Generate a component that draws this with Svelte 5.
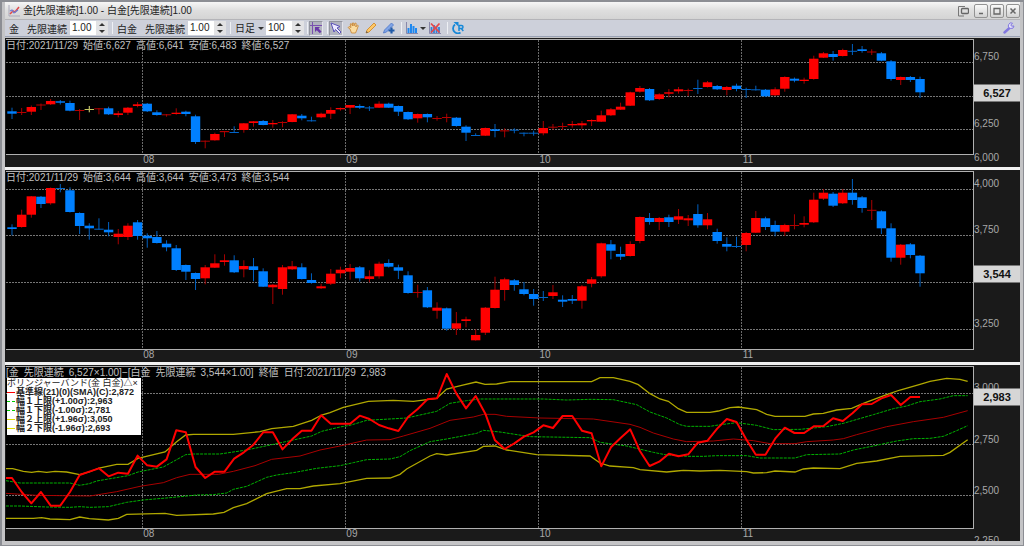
<script>
	const STEP = 9.66;
	const FIRST = 12;

	// kind, high, body top, body bottom, low
	const gold = [
		['b', 107.7, 111.3, 113.7, 119], ['r', 108, 112, 112.5, 115], ['r', 105.5, 107, 111.7, 115], ['r', 103.5, 104.5, 105.5, 110],
		['r', 99, 101, 104.3, 105], ['b', 100, 101.3, 102.7, 104.5], ['b', 100.7, 103, 110.7, 111.3], ['r', 109, 110, 111, 120],
		['y', 106, 109, 110, 112.3], ['r', 108, 108.3, 109, 114.3], ['b', 106.7, 108.3, 114.3, 115], ['r', 111, 113.3, 115, 117.3],
		['r', 107, 107.7, 112.7, 115], ['r', 102, 104.3, 106, 107.3], ['b', 103, 103.7, 111.3, 112], ['b', 110.3, 112.3, 115, 115.7],
		['r', 114, 114.3, 115.3, 116.7], ['r', 108.3, 112.7, 114, 114.7], ['b', 110.7, 111.7, 114, 116.3], ['b', 114.7, 116.3, 142, 144],
		['r', 140.5, 140.7, 141.4, 148.3], ['r', 132.7, 134, 140.3, 140.7], ['r', 131, 131, 132.2, 137], ['b', 126.3, 132, 132.7, 133],
		['r', 123, 123.3, 130, 132.7], ['r', 121, 121.3, 123, 126.7], ['b', 120, 121, 125, 125.3], ['r', 120, 123, 124.3, 127.7],
		['r', 121.3, 122, 123, 127.3], ['r', 114, 114.3, 122, 122.3], ['b', 114, 115.7, 118.3, 120.3], ['b', 116.7, 120.3, 121.3, 121.5],
		['r', 112.7, 113.7, 117.3, 118], ['r', 107.3, 110, 113.7, 119], ['r', 107.5, 108, 109.3, 110.7], ['r', 105, 105, 107.7, 114],
		['b', 104.3, 106, 107.7, 109], ['b', 106, 107.4, 108, 111], ['r', 101.3, 103.7, 107.7, 108], ['b', 102.7, 103.7, 107.7, 108],
		['b', 105.5, 106, 111.7, 116], ['b', 111.5, 112, 119.3, 120], ['r', 113.5, 114, 118.3, 122.7], ['b', 113.5, 114, 117.3, 122.3],
		['r', 116, 118, 118.7, 120.7], ['r', 113.7, 117, 117.7, 122.3], ['b', 117, 117.7, 126, 126.7], ['b', 125.3, 126.7, 132.7, 141],
		['b', 133.3, 135, 135.8, 136], ['r', 127.5, 128, 135.7, 136], ['b', 124, 129.3, 131, 137.3], ['r', 128.3, 130.3, 131.4, 137.3],
		['b', 128.3, 129.7, 130.5, 133.3], ['b', 132.5, 132.7, 133.4, 136.3], ['b', 130.7, 132.7, 133.4, 135.7], ['r', 121, 128, 133.3, 135.3],
		['r', 124, 126.7, 127.7, 129.7], ['r', 122.7, 126, 127, 130], ['r', 121, 124, 125.3, 127.7], ['r', 121, 123.3, 125.3, 128.7],
		['r', 119.3, 120, 121.3, 126], ['r', 110.7, 115.3, 121.7, 122], ['r', 108, 109.3, 115.3, 116], ['r', 102.7, 106.7, 109.7, 110],
		['r', 91.7, 92.3, 105.7, 106], ['r', 86, 88, 91.7, 92.7], ['b', 88, 89, 100.3, 101], ['r', 93.3, 94.3, 99, 100],
		['r', 89, 92.3, 93.7, 97.3], ['r', 87, 89.3, 91.3, 93.7], ['r', 88.7, 90, 91, 96], ['b', 79.7, 88, 88.7, 94],
		['r', 81, 82.3, 87, 87.5], ['b', 85, 86, 89.3, 90], ['r', 86, 87, 90, 95.3], ['b', 83.7, 85.7, 89, 91.3],
		['b', 87.7, 89, 89.7, 98], ['b', 85.7, 89.3, 90, 90.5], ['b', 89, 89.7, 96.3, 97], ['r', 87.3, 89.3, 95.3, 96],
		['r', 76.3, 77, 88.7, 91.7], ['b', 77.5, 78.7, 80.7, 82.3], ['r', 77.7, 79.7, 81, 83.7], ['r', 55.7, 58.7, 79, 79.7],
		['r', 52, 53.3, 57.7, 58], ['b', 51, 54, 57, 60.7], ['r', 48.7, 50, 56, 56.5], ['b', 44, 50.8, 51.5, 55],
		['b', 46, 49.3, 51, 52.7], ['r', 49.3, 51.5, 52.3, 55], ['b', 52, 53.3, 60.7, 61.3], ['b', 60, 61.3, 79, 80.7],
		['r', 76.5, 77, 80, 85], ['b', 76, 77, 80, 82], ['b', 76.7, 79, 92.3, 98]
	];

	const platinum = [
		['b', 224.3, 227.3, 229, 235.3], ['r', 209.7, 214.7, 227, 227.7], ['r', 196, 196.3, 214.7, 217.7], ['b', 196, 196.7, 204, 208],
		['r', 187.5, 188, 203.3, 204.7], ['b', 184, 188, 188.8, 192.3], ['b', 187.3, 190.3, 212, 212.5], ['b', 212.3, 213, 226, 234],
		['b', 223.3, 225.7, 228.3, 239.7], ['b', 218.3, 228.7, 229.3, 229.6], ['b', 222, 229.7, 232.3, 236.3], ['r', 229, 233.7, 237, 244.3],
		['r', 223.3, 225.7, 237, 240], ['b', 220, 222.3, 236, 239.7], ['b', 233.3, 235.7, 238.3, 247.7], ['b', 231, 237, 243, 243.5],
		['b', 240.3, 243.7, 247.3, 251.3], ['b', 245, 248.3, 270, 271], ['b', 264.5, 265, 271.7, 280], ['b', 272.5, 273, 279, 290],
		['r', 265, 267.3, 278.3, 284.3], ['r', 254.3, 263.3, 267.7, 268], ['r', 254.3, 260.3, 262, 265.7], ['b', 255.3, 260.3, 272.3, 273],
		['r', 260.3, 266, 269.3, 277.3], ['b', 258, 266.3, 270, 281.3], ['b', 268.3, 271.3, 286.7, 287], ['r', 284, 284.7, 287.3, 304],
		['r', 265, 267.3, 289, 294.7], ['r', 261, 266.3, 269.3, 270], ['b', 263.3, 267.3, 279, 279.5], ['b', 273.3, 280, 283, 283.7],
		['r', 283.7, 286.3, 288.3, 289], ['r', 269, 273.7, 283.7, 285], ['r', 266.7, 269.7, 273.3, 278.3], ['r', 264, 268, 271.7, 279.7],
		['b', 266, 267.3, 278.3, 281.7], ['r', 270.3, 276.3, 279, 282.3], ['r', 261.7, 263.7, 276.3, 278.7], ['b', 259.3, 263, 266.7, 267.5],
		['b', 264.7, 267.3, 270.7, 279], ['b', 271.3, 275.3, 293, 293.7], ['r', 284.7, 292, 292.7, 297.7], ['b', 287, 290.3, 307.3, 308],
		['r', 302.3, 307.7, 310.7, 318.7], ['b', 307.5, 308.3, 328.7, 330.7], ['r', 312, 323.3, 328.7, 335], ['r', 316.7, 319.3, 321, 327.3],
		['r', 329.3, 335, 340.3, 340.7], ['r', 307, 307.7, 332.7, 335], ['r', 276.7, 289.7, 308, 308.5], ['r', 277.7, 279.3, 290, 300.7],
		['b', 279, 280.3, 285, 290.7], ['b', 282, 289.3, 294, 295.3], ['b', 289, 294, 299, 305.7], ['b', 291, 297, 297.7, 301],
		['r', 285, 292.3, 296, 299], ['b', 295.3, 299.7, 301.7, 307], ['b', 295, 299, 300.7, 304], ['r', 285, 286.3, 300.7, 308.7],
		['r', 277, 279.3, 283.7, 287.3], ['r', 242.7, 243.3, 276.3, 277.7], ['b', 240, 244.3, 250.7, 259.3], ['b', 246.7, 254, 256.7, 260],
		['r', 241.3, 244, 256, 256.5], ['r', 216.5, 217, 241, 243.3], ['b', 213, 218, 222, 224.7], ['r', 217, 218, 222, 230],
		['b', 214.7, 217.3, 222, 227], ['r', 209, 216.3, 219.7, 224], ['r', 215, 218.3, 220.3, 226], ['b', 204.3, 214, 225.3, 227.7],
		['r', 213, 219.3, 225.3, 229.3], ['b', 228.7, 232, 241, 243.7], ['b', 237.3, 244, 246.7, 251.3], ['b', 236.7, 246, 246.7, 248],
		['r', 232, 233, 245, 251.3], ['r', 211, 218, 232.7, 233], ['b', 216.7, 218.3, 227, 230], ['b', 220.7, 225, 231.7, 236.3],
		['r', 223.7, 225, 231.7, 236], ['r', 214.3, 225, 225.7, 229.3], ['r', 216.3, 223, 224.7, 227.3], ['r', 192.7, 199.7, 222.3, 223],
		['r', 189, 192.7, 198.7, 200], ['b', 192, 193.7, 205.7, 207], ['r', 189, 192.7, 203.3, 204], ['b', 179, 192.7, 200, 204.7],
		['b', 196, 197.3, 208, 212.7], ['r', 200, 209.8, 210.6, 220], ['b', 210.3, 211.3, 228.3, 234], ['b', 223.3, 228.3, 257.7, 261.7],
		['r', 244, 244.7, 257.7, 264.7], ['b', 243, 244.3, 255, 258.3], ['b', 255, 255.7, 273.3, 286.7]
	];

	const spread = [
		354, 396, 430, 396, 437, 437, 396, 345, 335, 325, 349, 338, 341, 287, 316, 320, 298, 211, 217, 321, 354, 335, 335, 296,
		277, 254, 217, 217, 268, 238, 212, 212, 166, 191, 191, 191, 167, 177, 195, 205, 213, 171, 147, 118, 115, 42, 101, 145,
		108, 161, 241, 267, 250, 230, 217, 196, 204, 168, 168, 212, 220, 319, 262, 234, 208, 273, 318, 305, 281, 289, 283, 248,
		242, 206, 177, 186, 238, 284, 284, 236, 203, 219, 219, 199, 198, 175, 183, 160, 133, 132, 115, 105, 135, 111, 111
	];
	const spreadPoints = '18,354 ' + spread.map((y, i) => `${(36 + i * STEP * 3).toFixed(1)},${y}`).join(' ');

	const bands = [
		{ kind: 'outer', points: '18,326 38,326 70,334 95,337 115,334 140,337 165,334 200,336 239,344 268,336 297,324 350,313 384,313 414,295 495,276 530,245 557,225 580,223 700,223 780,215 815,206 880,199 935,181 965,165 990,158 1030,142 1105,124 1180,121 1240,124 1310,115 1340,87 1385,76 1428,66 1455,73 1490,72 1530,65 1775,65 1800,53 1840,53 1890,64 1915,74 1950,101 1980,117 2005,124 2035,146 2060,157 2130,157 2155,153 2190,143 2215,141 2270,149 2300,163 2325,169 2415,169 2440,162 2470,160 2510,150 2555,145 2590,130 2660,104 2700,90 2760,73 2790,64 2840,55 2880,58 2903,64' },
		{ kind: 'inner', points: '18,362 60,369 210,369 239,376 268,371 290,363 384,347 414,336 490,321 557,284 580,282 660,282 740,270 820,253 880,240 935,228 965,214 1020,201 1050,196 1100,181 1220,174 1310,154 1350,130 1400,122 1440,117 1630,117 1700,120 1770,118 1840,119 1910,134 1950,156 2000,174 2040,194 2060,199 2130,199 2155,195 2210,188 2270,196 2320,209 2400,208 2480,200 2530,190 2620,164 2680,146 2720,138 2760,125 2820,117 2860,107 2903,107' },
		{ kind: 'mean', points: '18,400 110,406 270,408 350,395 420,379 490,368 530,353 570,343 655,343 700,334 765,317 815,298 900,288 960,270 1020,258 1100,240 1170,239 1210,228 1290,205 1350,181 1420,171 1450,163 1485,163 1520,169 1620,174 1780,177 1890,193 1920,202 1960,219 2020,237 2060,245 2140,243 2200,237 2260,242 2310,251 2385,251 2420,245 2500,240 2530,236 2570,224 2660,200 2740,185 2830,172 2903,152' },
		{ kind: 'inner', points: '18,438 60,438 140,441 210,442 240,440 270,442 325,440 380,427 430,420 510,413 590,405 640,404 680,399 700,388 740,379 800,352 830,345 880,338 950,325 1020,317 1060,308 1100,299 1170,297 1200,290 1230,272 1290,245 1340,237 1430,220 1450,211 1500,216 1590,230 1770,233 1800,247 1880,258 1960,277 2000,285 2030,286 2060,289 2110,289 2150,287 2240,287 2280,294 2385,294 2420,284 2520,282 2560,270 2620,258 2690,243 2740,236 2790,235 2830,229 2870,212 2903,197' },
		{ kind: 'outer', points: '18,475 100,475 125,473 150,477 210,479 239,471 268,476 325,480 355,475 380,463 495,460 530,466 640,462 672,457 700,443 740,431 800,401 860,386 900,386 940,378 1020,371 1100,355 1170,354 1200,343 1220,327 1290,288 1310,281 1340,285 1430,271 1450,259 1485,258 1520,270 1610,284 1770,288 1800,309 1830,318 1900,323 1920,329 2000,336 2030,333 2050,331 2100,333 2160,331 2240,335 2260,339 2300,338 2325,333 2385,336 2410,327 2440,324 2520,326 2570,310 2630,303 2700,289 2830,286 2850,277 2903,239' }
	];

	const months = [
		{ label: '08', x: 142 },
		{ label: '09', x: 345 },
		{ label: '10', x: 538 },
		{ label: '11', x: 741 }
	];

	const panels = [
		{
			id: 'gold', size: 129, view: '6 40 967 114', box: [6, 40, 967, 114], unit: 1, candles: gold, grid: [62.5, 96.5, 129.5],
			info: ['日付:2021/11/29', '始値:6,627', '高値:6,641', '安値:6,483', '終値:6,527'],
			ticks: [['6,750', 19], ['6,250', 86], ['6,000', 120]], last: ['6,527', 55]
		},
		{
			id: 'platinum', size: 192, view: '6 172 967 177', box: [6, 172, 967, 177], unit: 1, candles: platinum, grid: [189.5, 235.5, 282.5, 329.5],
			info: ['日付:2021/11/29', '始値:3,644', '高値:3,644', '安値:3,473', '終値:3,544'],
			ticks: [['4,000', 14], ['3,750', 60], ['3,250', 154]], last: ['3,544', 104]
		},
		{
			id: 'spread', size: 176, view: '18 21 2901 483', box: [18, 21, 2901, 483], unit: 3, candles: [], grid: [100.5, 253.5, 406.5],
			info: ['[金', '先限連続', '6,527×1.00]−[白金', '先限連続', '3,544×1.00]', '終値', '日付:2021/11/29', '2,983'],
			ticks: [['3,000', 23], ['2,750', 75], ['2,500', 126], ['2,250', 176]], last: ['2,983', 32]
		}
	];

	const legend = [
		{ kind: 'main', text: '基準線(21)(0)(SMA)(C):2,872' },
		{ kind: 'green', text: '幅１上限(+1.00σ):2,963' },
		{ kind: 'green', text: '幅１下限(-1.00σ):2,781' },
		{ kind: 'yellow', text: '幅２上限(+1.96σ):3,050' },
		{ kind: 'yellow', text: '幅２下限(-1.96σ):2,693' }
	];

	let goldRatio = $state('1.00');
	let platinumRatio = $state('1.00');
	let bars = $state('100');

	const bump = (value, by) => (Number(value) + by).toFixed(2);
</script>

{#snippet spinner(name, up, down)}
	<span class="spin">
		<button type="button" aria-label={`${name} 増`} onclick={up}><i class="up"></i></button>
		<button type="button" aria-label={`${name} 減`} onclick={down}><i class="down"></i></button>
	</span>
{/snippet}

<div class="window">
	<header class="titlebar">
		<svg class="app-icon" viewBox="0 0 12 12" aria-hidden="true">
			<path d="M1 0v11h11" fill="none" stroke="#aab" />
			<path d="M2 9l3-3 2 1 4-5" fill="none" stroke="#e04848" stroke-width="1.5" />
			<path d="M2 6l2-1 2 3 4-3" fill="none" stroke="#6a7ed8" stroke-width="1.2" />
		</svg>
		<h1>金[先限連続]1.00 - 白金[先限連続]1.00</h1>
		<button class="dock" type="button" aria-label="切り離し">
			<svg viewBox="0 0 12 12"><path d="M7 11H1.500V1.500H8" fill="none" stroke="#777" /><rect x="4.500" y="3.500" width="7" height="5" rx="1" fill="#ddd" stroke="#666" stroke-width="1.300" /></svg>
		</button>
		<div class="window-buttons">
			<button type="button" aria-label="最小化"><svg viewBox="0 0 12 12"><path d="M4 8.500h4" stroke="#666" stroke-width="1.500" /></svg></button>
			<button type="button" aria-label="最大化"><svg viewBox="0 0 12 12"><path d="M3 3.500h6v5.500H3z" fill="none" stroke="#666" stroke-width="1.300" /></svg></button>
			<button type="button" aria-label="閉じる"><svg viewBox="0 0 12 12"><path d="M3.500 3.500l5 5M8.500 3.500l-5 5" stroke="#666" stroke-width="1.500" /></svg></button>
		</div>
	</header>

	<div class="toolbar">
		<label class="field">
			<span class="name">金</span><span class="kind">先限連続</span>
			<input type="text" bind:value={goldRatio} />
		</label>
		{@render spinner('金', () => (goldRatio = bump(goldRatio, 0.01)), () => (goldRatio = bump(goldRatio, -0.01)))}
		<i class="sep"></i>
		<label class="field">
			<span class="name">白金</span><span class="kind">先限連続</span>
			<input type="text" bind:value={platinumRatio} />
		</label>
		{@render spinner('白金', () => (platinumRatio = bump(platinumRatio, 0.01)), () => (platinumRatio = bump(platinumRatio, -0.01)))}
		<i class="sep"></i>
		<span class="period">
			<select aria-label="足種">
				<option>日足</option>
				<option>週足</option>
				<option>月足</option>
			</select>
			<i class="caret"></i>
		</span>
		<input type="text" aria-label="本数" bind:value={bars} />
		{@render spinner('本数', () => (bars = String(Number(bars) + 1)), () => (bars = String(Number(bars) - 1)))}
		<i class="sep tight"></i>
		<button class="tool pressed" type="button" aria-label="十字線">
			<svg viewBox="0 0 12 12"><path d="M2.500 0v12M0 3.500h12" stroke="#7a50b0" fill="none" /><path d="M5 5h5L8.500 6.500l3 3-1.700 1.700-3-3L5 10z" fill="#6a38a8" /></svg>
		</button>
		<i class="sep"></i>
		<button class="tool pressed" type="button" aria-label="選択">
			<svg viewBox="0 0 12 12"><path d="M1 1l9 3.500-3 1.500 4 4-1.500 1.500-4-4L4 10z" fill="#eceaff" stroke="#5a50b8" /></svg>
		</button>
		<button class="tool" type="button" aria-label="移動">
			<svg viewBox="0 0 12 12"><path d="M3 7L1 5.500 2 4.500l2 1-.8-3.500 1-.5L5.500 4V1h1.200l.3 3 1-3 1.200.4L8.800 5l1.500-2 1 .7L9.800 8 8.500 11h-4z" fill="#fbdca0" stroke="#c98a3c" stroke-width=".9" /></svg>
		</button>
		<button class="tool" type="button" aria-label="描画">
			<svg viewBox="0 0 12 12"><path d="M1 11l1-3 7-7 2 2-7 7z" fill="#ffc868" stroke="#d08c2c" stroke-width=".9" /><path d="M1 11l.6-2 1.400 1.400z" fill="#555" /></svg>
		</button>
		<button class="tool" type="button" aria-label="描画追加">
			<svg viewBox="0 0 12 12"><path d="M.5 11l1-3 7-7 2 2-7 7z" fill="#7fa4e8" stroke="#557cc8" stroke-width=".9" /><path d="M8.500 5.500v6M5.500 8.500h6" stroke="#205aa8" stroke-width="2.200" /></svg>
		</button>
		<i class="sep"></i>
		<button class="tool with-caret" type="button" aria-label="指標">
			<svg viewBox="0 0 12 12"><path d="M.5 0v11.500H12" fill="none" stroke="#88a" /><path d="M2.500 11V6M5 11V2M7.500 11V4M10 11V6" stroke="#1e88f0" stroke-width="2" /></svg>
			<i class="caret"></i>
		</button>
		<button class="tool" type="button" aria-label="指標削除">
			<svg viewBox="0 0 12 12"><path d="M.5 0v11.500H12" fill="none" stroke="#88a" /><path d="M2.500 11V5M5 11V3M7.500 11V4M10 11V5" stroke="#3080d8" stroke-width="1.800" /><path d="M2 1.500l8.500 9M10.500 1.500L2 10.500" stroke="#e84848" stroke-width="1.800" /></svg>
		</button>
		<i class="sep"></i>
		<button class="tool" type="button" aria-label="更新">
			<svg viewBox="0 0 12 12"><path d="M3 2.500C.5 4.500.5 8 2.500 9.800S7 11.500 8.500 10.500" fill="none" stroke="#1688d8" stroke-width="1.800" /><path d="M1.500 0H6.500v4.500z" fill="#1688d8" /><path d="M7 9V3.500h2.500a1.500 1.500 0 0 1 0 3H7M9.300 6.500l2 2.500" fill="none" stroke="#1688d8" stroke-width="1.500" /></svg>
		</button>
		<button class="tool settings" type="button" aria-label="設定">
			<svg viewBox="0 0 12 12"><path d="M1.500 10.500L7 5.500" stroke="#8278e0" stroke-width="2.400" stroke-linecap="round" /><path d="M9.500 1.200A2.800 2.800 0 1 0 11 4L8.600 4.200 7.800 3z" fill="#e4e2fa" stroke="#8278e0" /></svg>
		</button>
	</div>

	<main class="panels">
		{#each panels as p (p.id)}
			{@const [vx, vy, vw, vh] = p.box}
			<section class="panel" style:flex-grow={p.size}>
				<div class="body">
					<div class="plot">
						<svg viewBox={p.view} preserveAspectRatio="none" aria-hidden="true">
							{#each p.grid as y}
								<line class="grid" x1={vx} x2={vx + vw} y1={y} y2={y} />
							{/each}
							{#each months as m}
								<line class="grid month" x1={(m.x + 0.5) * p.unit} x2={(m.x + 0.5) * p.unit} y1={vy} y2={vy + vh} />
							{/each}
							{#each p.candles as [kind, high, top, bottom, low], i}
								{@const x = FIRST + i * STEP}
								<g class={kind}>
									<line class="wick" x1={x} x2={x} y1={high} y2={low} />
									<rect class:flat={bottom - top < 1.2} x={x - 4.7} y={top} width="9.4" height={Math.max(bottom - top, 1)} />
								</g>
							{/each}
							{#if p.id === 'spread'}
								{#each bands as band}
									<polyline class={band.kind} points={band.points} />
								{/each}
								<polyline class="main" points={spreadPoints} />
							{/if}
						</svg>
						<p class="info">
							{#each p.info as part}<span>{part}</span>{/each}
						</p>
						{#if p.id === 'spread'}
							<div class="legend">
								<div class="legend-title">ボリンジャーバンド(金 白金)△×</div>
								{#each legend as row}
									<div class="legend-row"><i class={row.kind}></i>{row.text}</div>
								{/each}
							</div>
						{/if}
					</div>
					<div class="months">
						{#each months as m}
							<span style:left={`${((m.x - 4) / 968) * 100}%`}>{m.label}</span>
						{/each}
					</div>
				</div>
				<div class="axis">
					{#each p.ticks as [text, y]}
						<span class="tick" style:top={`${(y / p.size) * 100}%`}>{text}</span>
					{/each}
					<strong style:top={`${(p.last[1] / p.size) * 100}%`}>{p.last[0]}</strong>
				</div>
			</section>
		{/each}
	</main>
</div>

<style>
	:global(body) {
		margin: 0;
		background: #bcbcbe;
	}

	.window {
		box-sizing: border-box;
		display: flex;
		flex-direction: column;
		height: 100vh;
		min-height: 360px;
		padding: 0 3px 4px 3px;
		border: 1px solid #8c8e94;
		border-width: 2px 1px 1px 2px;
		background: #c4c4c6;
		font-family: 'Liberation Sans', 'Noto Sans CJK JP', sans-serif;
		font-size: 10px;
		color: #222;
	}

	button,
	input,
	select {
		margin: 0;
		padding: 0;
		border: 0;
		border-radius: 0;
		background: none;
		font: inherit;
		color: inherit;
	}

	svg {
		display: block;
	}

	.titlebar {
		display: flex;
		align-items: center;
		flex: none;
		height: 17px;
		padding-left: 3px;
		border-bottom: 1px solid #b4b4b8;
		background: linear-gradient(#f6f6f6, #dedede 50%, #d4d4d4);
	}

	.app-icon {
		width: 12px;
		height: 12px;
		margin-right: 3px;
	}

	h1 {
		flex: 1;
		margin: 0;
		font-size: 10px;
		font-weight: 400;
		line-height: 16px;
		white-space: nowrap;
	}

	.dock svg {
		width: 12px;
		height: 12px;
	}

	.window-buttons {
		display: flex;
		gap: 2px;
		margin-left: 5px;
	}

	.window-buttons button {
		box-sizing: border-box;
		width: 14px;
		height: 14px;
		border: 1px solid #939393;
		border-radius: 2px;
		background: linear-gradient(#fafafa, #d2d2d2);
	}

	.window-buttons svg {
		width: 12px;
		height: 12px;
	}

	.toolbar {
		display: flex;
		align-items: center;
		flex: none;
		height: 16px;
		padding-left: 4px;
		border-bottom: 1px solid #9aa2b4;
		background: #cdd0da;
	}

	.field {
		display: flex;
		align-items: center;
		white-space: nowrap;
	}

	.kind {
		margin: 0 3px 0 8px;
	}

	.toolbar input {
		box-sizing: border-box;
		width: 26px;
		height: 14px;
		padding-left: 2px;
		background: #fff;
		line-height: 14px;
	}

	.spin {
		display: flex;
		flex-direction: column;
		width: 12px;
		height: 14px;
		background: #e2e2e4;
	}

	.spin button {
		display: flex;
		align-items: center;
		justify-content: center;
		flex: 1;
	}

	.up,
	.down,
	.caret {
		border: 3px solid transparent;
	}

	.up {
		border-top: 0;
		border-bottom-color: #333;
	}

	.down,
	.caret {
		border-bottom: 0;
		border-top-color: #333;
	}

	.sep {
		width: 1px;
		height: 12px;
		margin: 0 4px;
		background: #eef0f4;
	}

	.sep.tight {
		margin: 0 1px 0 3px;
	}

	.period {
		display: flex;
		align-items: center;
		gap: 3px;
		margin-right: 2px;
	}

	select {
		appearance: none;
		width: 20px;
	}

	.tool {
		display: flex;
		align-items: center;
		justify-content: center;
		box-sizing: border-box;
		height: 15px;
		padding: 0 1px;
		margin-right: 4px;
	}

	.tool svg {
		width: 12px;
		height: 12px;
	}

	.tool + .sep {
		margin: 0 3px 0 1px;
	}

	.pressed {
		margin-right: 3px;
		background: #b2b4c0;
		border: 1px solid #92949e;
		border-right-color: #e4e4ea;
		border-bottom-color: #e4e4ea;
		padding: 0;
	}

	.pressed + .sep {
		margin: 0 1px;
	}

	.with-caret {
		gap: 2px;
		margin-right: 1px;
	}

	.settings {
		margin-left: auto;
	}

	.panels {
		display: flex;
		flex-direction: column;
		gap: 3px;
		flex: 1;
		min-height: 0;
		margin-top: 1px;
		background: #f2f2f2;
	}

	.panel {
		display: flex;
		flex: 1 1 0;
		min-height: 0;
		background: #1a1a1a;
		color: #a8a8a8;
	}

	.body {
		display: flex;
		flex: 1;
		flex-direction: column;
		min-width: 0;
	}

	.plot {
		position: relative;
		flex: 1;
		min-height: 0;
		margin: 1px 0 0 1px;
		border: solid #b0b0b0;
		border-width: 1px 1px 1px 0;
		background: #000;
	}

	.plot > svg {
		position: absolute;
		inset: 0;
		width: 100%;
		height: 100%;
	}

	.plot svg line,
	.plot svg polyline {
		fill: none;
		vector-effect: non-scaling-stroke;
	}

	.grid {
		stroke: #767676;
		stroke-dasharray: 2 1;
	}

	.month {
		stroke: #6a6a6a;
	}

	.r {
		fill: #f00;
		stroke: #a80000;
	}

	.b {
		fill: #0080ff;
		stroke: #0060c0;
	}

	.y {
		fill: #c8c860;
		stroke: #e0e080;
	}

	.plot svg rect {
		stroke: none;
	}

	.r .flat {
		fill: #b40000;
	}

	.b .flat {
		fill: #0064c8;
	}

	.plot svg .outer {
		stroke: #b0a800;
		stroke-width: 1.3px;
	}

	.plot svg .inner {
		stroke: #00b000;
		stroke-dasharray: 3 1;
	}

	.plot svg .mean {
		stroke: #a80000;
	}

	.plot svg .main {
		stroke: #f00;
		stroke-width: 2px;
		stroke-linejoin: round;
	}

	.info {
		position: absolute;
		top: 0;
		left: 0;
		display: flex;
		gap: 5px;
		margin: 0;
		line-height: 12px;
		white-space: nowrap;
		color: #c0c0c0;
	}

	.legend {
		position: absolute;
		top: 11px;
		left: 1px;
		box-sizing: border-box;
		width: 134px;
		padding-bottom: 2px;
		background: #fff;
		color: #222;
		font-size: 9px;
		white-space: nowrap;
	}

	.legend-title {
		line-height: 10px;
	}

	.legend-row {
		display: flex;
		align-items: center;
		height: 9px;
		line-height: 9px;
		font-weight: 700;
	}

	.legend-row i {
		width: 8px;
		margin-right: 1px;
		border-top: 1px solid #f00;
	}

	.legend-row .green {
		border-top: 1px dashed #0c0;
	}

	.legend-row .yellow {
		border-top-color: #dd0;
	}

	.months {
		position: relative;
		flex: none;
		height: 12px;
		overflow: hidden;
	}

	.months span {
		position: absolute;
		top: 0;
		line-height: 10px;
	}

	.axis {
		position: relative;
		flex: none;
		width: 46px;
		overflow: hidden;
	}

	.tick {
		position: absolute;
		left: 0;
		line-height: 12px;
		transform: translateY(-50%);
	}

	strong {
		position: absolute;
		right: 0;
		left: 0;
		background: #d6d6d6;
		color: #111;
		font-size: 11px;
		line-height: 17px;
		text-align: center;
		transform: translateY(-50%);
	}
</style>
